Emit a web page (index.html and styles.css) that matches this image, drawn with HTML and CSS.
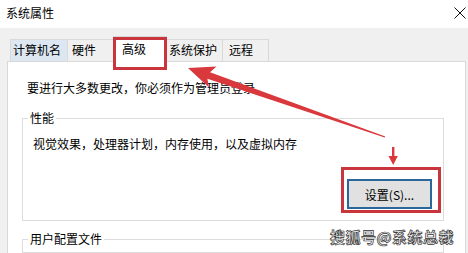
FILE: index.html
```html
<!DOCTYPE html>
<html lang="zh-CN">
<head>
<meta charset="utf-8">
<title>系统属性</title>
<link rel="stylesheet" href="styles.css">
</head>
<body>
<div class="titlebar">
  <span class="title">系统属性</span>
  <svg class="close" viewBox="0 0 12 12" width="12" height="12"><path d="M0.5 0.5 L11.5 11.5 M11.5 0.5 L0.5 11.5" stroke="#111" stroke-width="1" fill="none"/></svg>
</div>
<div class="tabs">
  <div class="tab t1 hover">计算机名</div>
  <div class="tab t2">硬件</div>
  <div class="tab t3 active">高级</div>
  <div class="tab t4">系统保护</div>
  <div class="tab t5">远程</div>
</div>
<div class="panel">
  <p class="note">要进行大多数更改，你必须作为管理员登录。</p>
  <fieldset class="group perf">
    <legend>性能</legend>
    <p class="desc">视觉效果，处理器计划，内存使用，以及虚拟内存</p>
    <div class="btnrow"><span class="mark"><button class="btn" type="button">设置(S)...</button></span></div>
  </fieldset>
  <fieldset class="group profile">
    <legend>用户配置文件</legend>
  </fieldset>
</div>
<svg class="arrows" viewBox="0 0 468 253" width="468" height="253">
  <polygon points="188,68 216.5,66.5 210,72.3 385.3,136.4 384.7,137.6 207.4,78.8 209,87.5" fill="#d9383c"/>
  <rect x="392" y="147" width="2.4" height="11" fill="#d9383c"/>
  <polygon points="388.5,156 397.8,156 393.2,165" fill="#d9383c"/>
</svg>
<div class="watermark">搜狐号@系统总裁</div>
</body>
</html>
```

FILE: styles.css
```css
* { box-sizing: border-box; }
html, body { margin: 0; padding: 0; }
body {
  width: 468px;
  height: 253px;
  overflow: hidden;
  position: relative;
  background: #f0f0f0;
  font-family: "Noto Sans CJK SC", "Microsoft YaHei", sans-serif;
  font-size: 12px;
  color: #000;
}
.titlebar {
  height: 28px;
  background: #fff;
  display: flex;
  align-items: center;
  padding: 0 2px 2px 6px;
}
.title { line-height: 16px; }
.close { margin-left: auto; display: block; }

.tabs {
  display: flex;
  margin: 11px 0 0 10px;
  height: 22px;
  position: relative;
  z-index: 1;
}
.tab {
  height: 22px;
  border: 1px solid #d9d9d9;
  border-right: none;
  border-bottom: none;
  line-height: 20px;
  background: #f0f0f0;
  white-space: nowrap;
}
.tab.hover { background: #dce7f2; }
.t1 { width: 57px; padding-left: 2px; }
.t2 { width: 48px; padding-left: 4px; }
.t3 { width: 50px; }
.t4 { width: 57px; padding-left: 3px; }
.t5 { width: 47px; padding-left: 6px; border-right: 1px solid #d9d9d9; }
.tab.active {
  width: 54px;
  margin: -3px -2px 0 -2px;
  height: 26px;
  padding: 4px 0 0 8px;
  line-height: 16px;
  background: #fff;
  border-right: 1px solid #d9d9d9;
  position: relative;
  z-index: 2;
}
.tab.active::after {
  content: "";
  position: absolute;
  left: -1px;
  top: 0;
  width: 48px;
  height: 27px;
  border: 3px solid #c9353c;
}

.panel {
  margin: 0 2px 0 7px;
  height: 193px;
  background: #fff;
  border: 1px solid #d9d9d9;
  padding: 0 0 0 14px;
}
.note {
  margin: 18px 0 0 5px;
  line-height: 16px;
}
.group {
  margin: 14px 0 0 0;
  width: 422px;
  min-width: 0;
  border: 1px solid #dcdcdc;
  padding: 0 0 11px 0;
}
.group legend {
  margin-left: 5px;
  padding: 0 2px;
  line-height: 16px;
}
.desc {
  margin: 10px 0 0 10px;
  line-height: 16px;
}
.btnrow {
  display: flex;
  justify-content: flex-end;
  margin-top: 27px;
  padding-right: 11px;
}
.mark { position: relative; display: block; }
.mark::after {
  content: "";
  position: absolute;
  left: -6px;
  top: -12px;
  right: -9px;
  bottom: -4px;
  border: 3px solid #c9353c;
}
.btn {
  display: block;
  width: 85px;
  height: 30px;
  border: 2px solid #2b679b;
  background: #e1e1e1;
  font-family: inherit;
  font-size: 12px;
  color: #000;
  padding: 0;
}
.profile {
  margin-top: 10px;
  height: 22px;
  padding: 0;
}

.arrows {
  position: absolute;
  left: 0;
  top: 0;
  pointer-events: none;
}
.watermark {
  position: absolute;
  left: 330px;
  top: 228px;
  font-size: 15px;
  font-weight: bold;
  line-height: 18px;
  letter-spacing: 0.5px;
  color: #f4f4f4;
  -webkit-text-stroke: 0.7px #333;
}
```
